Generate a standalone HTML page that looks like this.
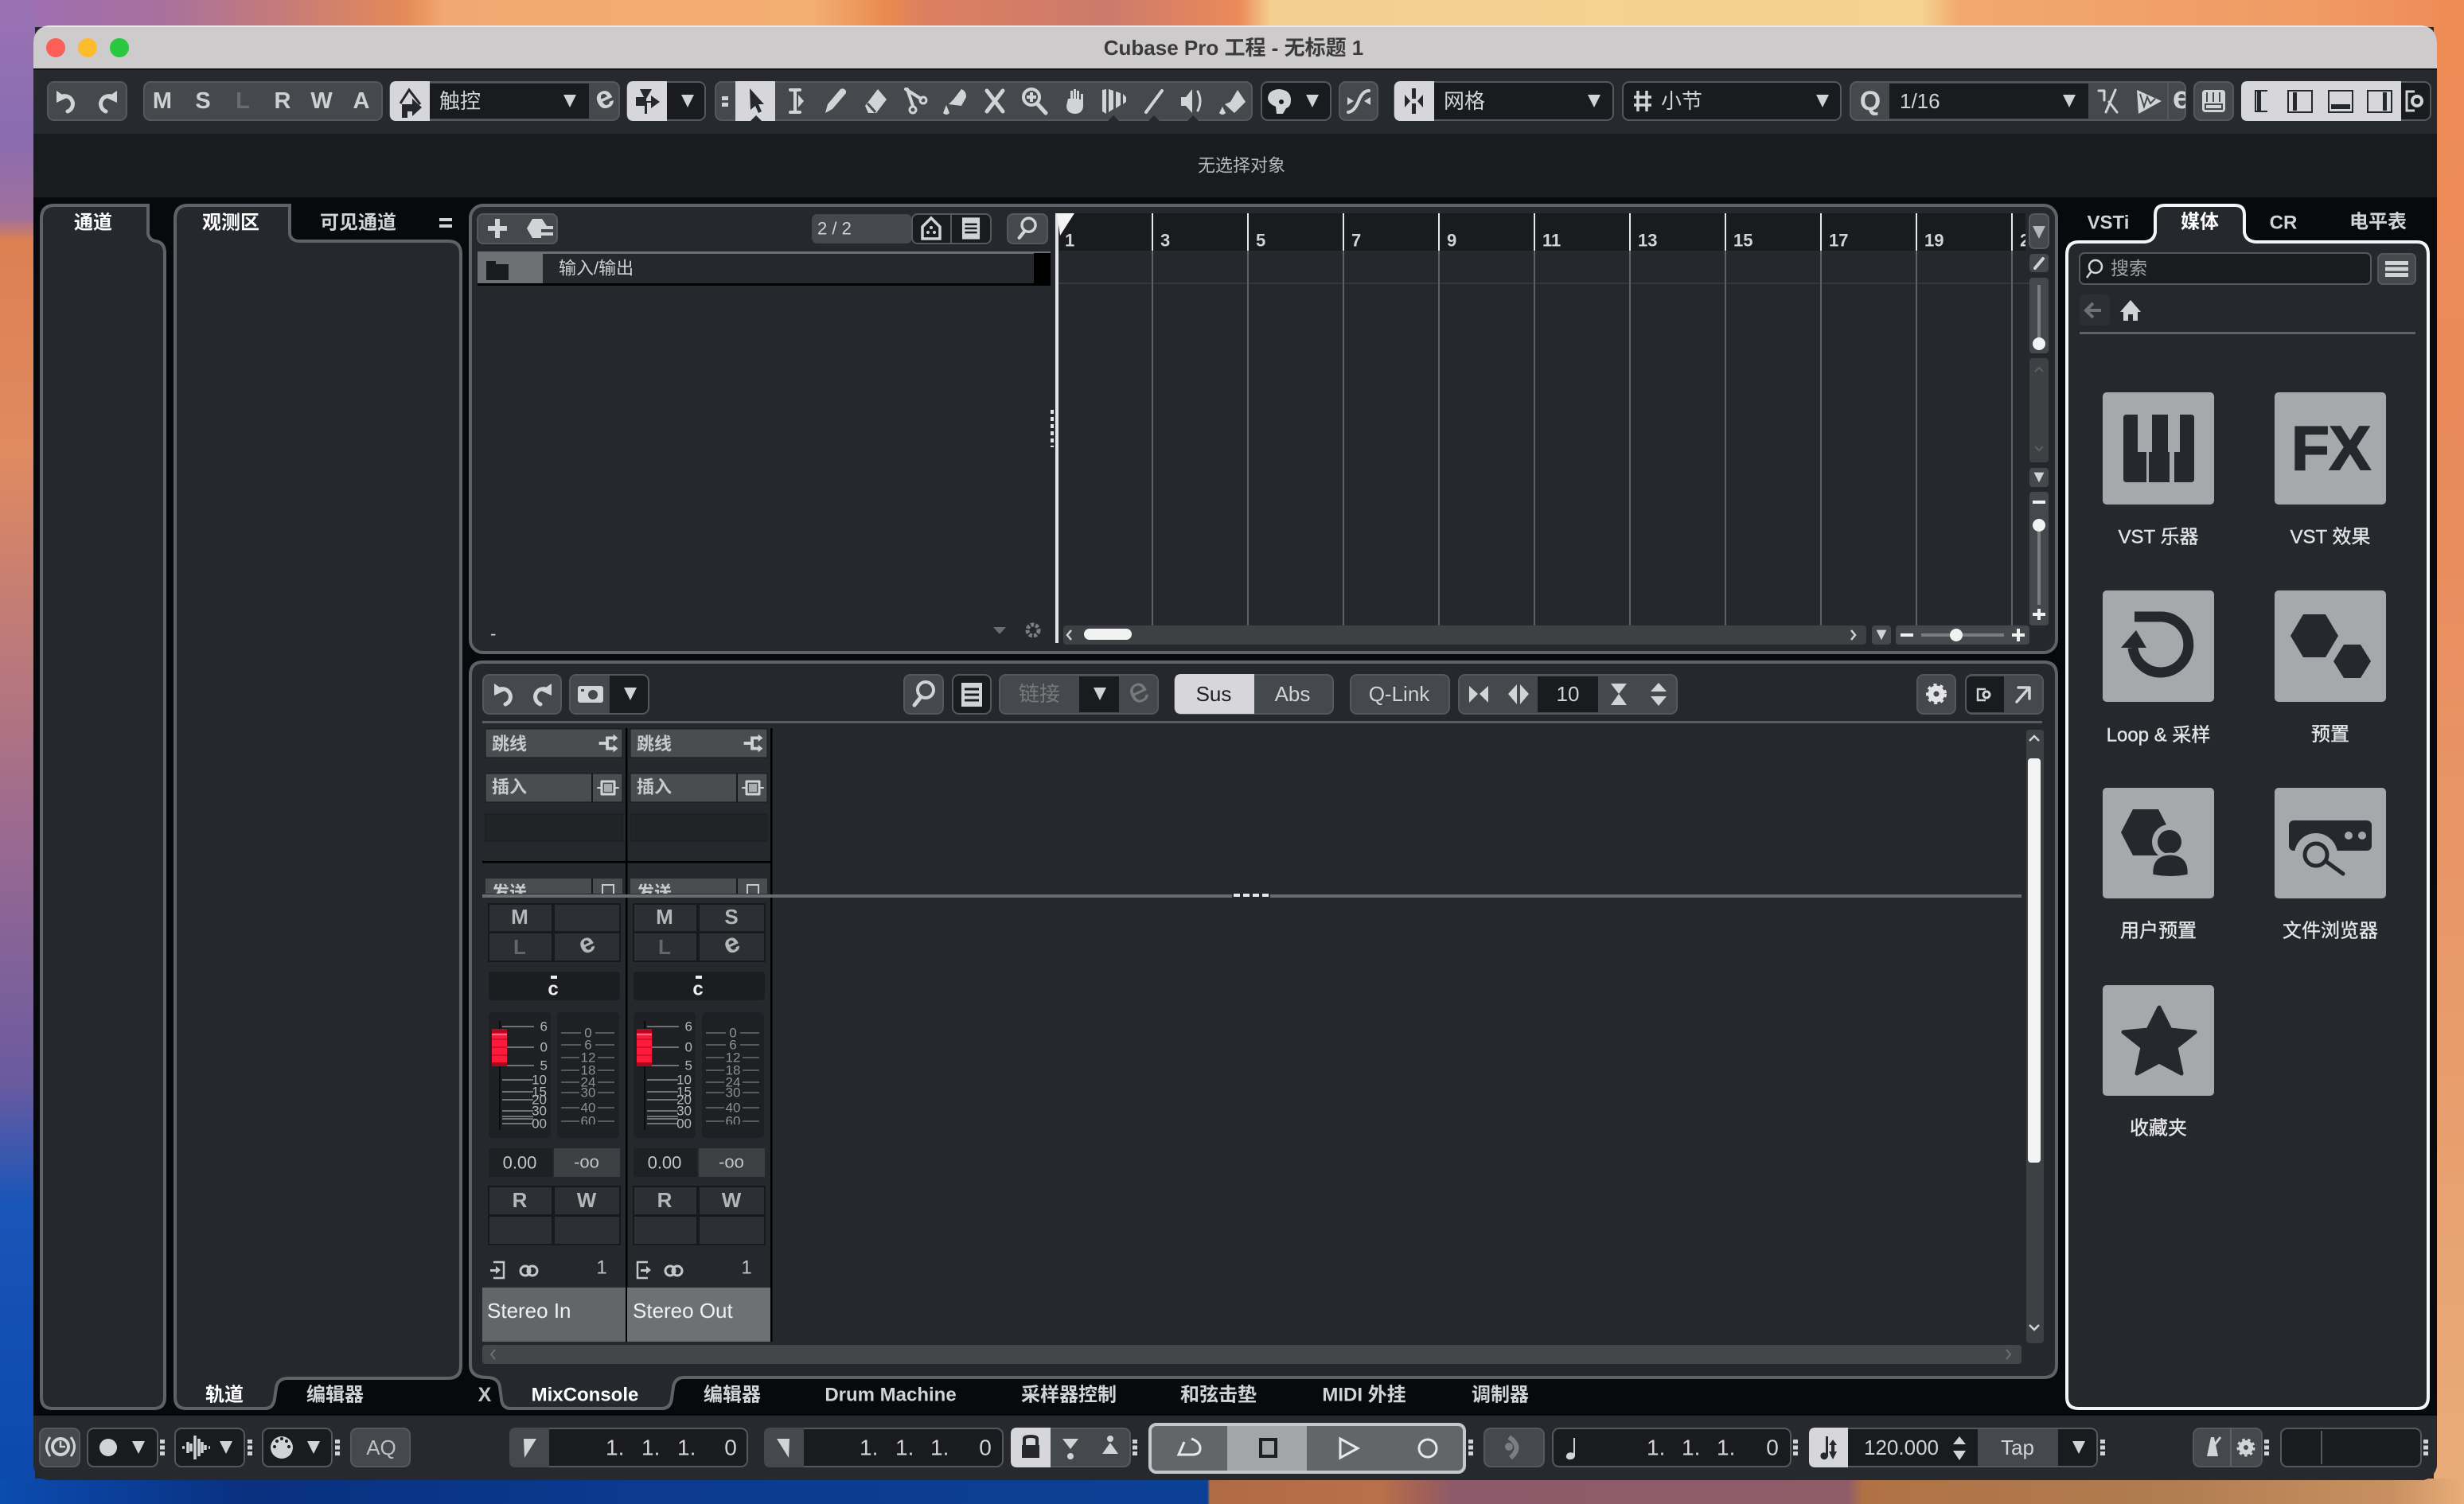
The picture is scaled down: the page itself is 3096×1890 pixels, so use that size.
<!DOCTYPE html>
<html lang="zh"><head><meta charset="utf-8"><title>Cubase Pro</title>
<style>
html,body{margin:0;padding:0;background:#25282c;width:3096px;height:1890px;overflow:hidden}
svg{display:block}
text{font-family:"Liberation Sans","Noto Sans CJK SC",sans-serif;font-size:26px;fill:#d2d3d5;dominant-baseline:central}
.m{text-anchor:middle}.r{text-anchor:end}
.b{font-weight:bold}
.s24{font-size:24px}.s22{font-size:22px}.s16{font-size:17px;fill:#b5b7b9}.s16b{font-size:17px;fill:#8e9093}
.g{fill:#45484c;stroke:#55585c;stroke-width:2}
.h{fill:#45484c}
.d{fill:#191b1e}
.db{fill:#191b1e;stroke:#55585c;stroke-width:2}
.w{fill:#d7d7db}
.i{fill:#d2d3d5}
.k{fill:#25282c}
.l{fill:none;stroke:#d2d3d5;stroke-width:4;stroke-linecap:round;stroke-linejoin:round}
.p{fill:#25282c;stroke:#5f6266;stroke-width:4}
.st{fill:#2c2f33;stroke:#17191c;stroke-width:2}
.lbl{fill:#e4e4e6;font-size:24px;stroke:#e4e4e6;stroke-width:.4}
.tk{stroke:#8a8c8f;stroke-width:1.5}
</style></head><body>
<svg xmlns="http://www.w3.org/2000/svg" width="3096" height="1890" viewBox="0 0 3096 1890">
<defs>
<linearGradient id="top" x1="0" x2="1" y1="0" y2="0" gradientUnits="objectBoundingBox">
<stop offset="0" stop-color="#9c6eb4"/><stop offset=".065" stop-color="#a8709e"/><stop offset=".115" stop-color="#c67b78"/><stop offset=".165" stop-color="#e48a58"/><stop offset=".18" stop-color="#f2a872"/><stop offset=".33" stop-color="#f3ae72"/><stop offset=".36" stop-color="#ea8a50"/><stop offset=".375" stop-color="#dc7f60"/><stop offset=".45" stop-color="#cc7a6c"/><stop offset=".503" stop-color="#ec8a58"/><stop offset=".516" stop-color="#f4d090"/><stop offset=".78" stop-color="#f3d38f"/><stop offset=".795" stop-color="#f2a870"/><stop offset=".94" stop-color="#f09a64"/><stop offset="1" stop-color="#ee8a54"/>
</linearGradient>
<linearGradient id="left" x1="0" x2="0" y1="0" y2="1">
<stop offset="0" stop-color="#9a72b4"/><stop offset=".09" stop-color="#8a6cb0"/><stop offset=".145" stop-color="#a0709c"/><stop offset=".16" stop-color="#dc8052"/><stop offset=".3" stop-color="#e08a60"/><stop offset=".55" stop-color="#9c6a90"/><stop offset=".72" stop-color="#6a5aa0"/><stop offset=".8" stop-color="#1a55b8"/><stop offset="1" stop-color="#0a48ac"/>
</linearGradient>
<linearGradient id="right" x1="0" x2="0" y1="0" y2="1">
<stop offset="0" stop-color="#ee8c56"/><stop offset=".3" stop-color="#e98a5c"/><stop offset=".7" stop-color="#e89c6c"/><stop offset="1" stop-color="#e8ad7a"/>
</linearGradient>
<linearGradient id="bot" x1="0" x2="1" y1="0" y2="0">
<stop offset="0" stop-color="#0b4cb0"/><stop offset=".1" stop-color="#0a3080"/><stop offset=".26" stop-color="#0b3a8f"/><stop offset=".49" stop-color="#0c4096"/><stop offset=".491" stop-color="#b06a44"/><stop offset=".56" stop-color="#b8704a"/><stop offset=".578" stop-color="#a06058"/><stop offset=".59" stop-color="#8c5a6a"/><stop offset=".75" stop-color="#8f5c68"/><stop offset=".756" stop-color="#b07244"/><stop offset=".88" stop-color="#b07c50"/><stop offset=".97" stop-color="#c89060"/><stop offset="1" stop-color="#e8ad7a"/>
</linearGradient>
<clipPath id="win"><rect x="42" y="32" width="3020" height="1828" rx="20"/></clipPath>
<clipPath id="cl1"><rect x="600" y="1100" width="400" height="23"/></clipPath>
<clipPath id="cl2"><rect x="1300" y="268" width="1245" height="60"/></clipPath>
<clipPath id="cl3"><rect x="2724" y="102" width="22" height="50"/></clipPath>
<clipPath id="cl4"><rect x="700" y="1272" width="80" height="141"/></clipPath>
<clipPath id="cl5"><rect x="882" y="1272" width="80" height="141"/></clipPath>
<g id="tri"><polygon class="i" points="-8,-8 8,-8 0,8"/></g>
<g id="dots"><rect class="i" x="-3" y="-10" width="6" height="5"/><rect class="i" x="-3" y="-2.500" width="6" height="5"/><rect class="i" x="-3" y="5" width="6" height="5"/></g>
<g id="undo"><path class="l" style="stroke-width:5" d="M-9 -4 A10 10 0 1 1 1 13"/><polygon class="i" points="-13,-13 -13,2 0,-4"/></g>
<g id="redo"><path class="l" style="stroke-width:5" d="M9 -4 A10 10 0 1 0 -1 13"/><polygon class="i" points="13,-13 13,2 0,-4"/></g>
<g id="srch"><circle class="l" cx="3" cy="-5" r="10" style="stroke-width:4"/><path class="l" style="stroke-width:5" d="M-3 4 L-11 14"/></g>
<g id="lst"><rect class="i" x="-13" y="-16" width="26" height="32"/><path d="M-9 -6H9M-9 0H9M-9 6H9" stroke="#191b1e" stroke-width="3"/></g>
<g id="rt"><path class="i" d="M-12 -2H-3V-9H7V-12L13 -7L7 -2V-5H1V5H7V2L13 7L7 12V9H-3V2H-12Z"/></g>
<g id="ins"><path class="l" style="stroke-width:3" d="M-8 -8H8V8H-8Z"/><rect class="i" x="-5" y="-5" width="10" height="10" opacity=".7"/><path class="l" style="stroke-width:2" d="M-13 0H-8M8 0H13"/></g>
</defs>

<!-- wallpaper -->
<rect x="0" y="0" width="3096" height="34" fill="url(#top)"/>
<rect x="0" y="0" width="44" height="1890" fill="url(#left)"/>
<rect x="3058" y="30" width="38" height="1860" fill="url(#right)"/>
<rect x="0" y="1858" width="3096" height="32" fill="url(#bot)"/>

<g clip-path="url(#win)">
<rect x="42" y="32" width="3020" height="1828" fill="#08090c"/>
<rect x="42" y="32" width="3020" height="56" fill="#cdcbcc"/>
<rect x="42" y="32" width="3020" height="2" fill="#e8e6e6"/>
<rect x="42" y="86" width="3020" height="2" fill="#111214"/>
<rect x="42" y="88" width="3020" height="80" fill="#26292d"/>
<rect x="42" y="168" width="3020" height="80" fill="#191b1e"/>
<rect x="42" y="1779" width="3020" height="81" fill="#26292d"/>
</g>

<!-- title bar -->
<circle cx="70" cy="60" r="12" fill="#fb5f57"/><circle cx="110" cy="60" r="12" fill="#fdbc2e"/><circle cx="150" cy="60" r="12" fill="#28c83f"/>
<text class="m b" x="1550" y="60" style="fill:#3b3a3c">Cubase Pro 工程 - 无标题 1</text>
<text class="m s22" x="1560" y="208" style="fill:#b5b7b9">无选择对象</text>

<!-- toolbar -->
<rect class="g" x="60" y="103" width="99" height="48" rx="8"/>
<use href="#undo" transform="translate(84,127)"/><use href="#redo" transform="translate(134,127)"/>
<rect class="g" x="181" y="103" width="299" height="48" rx="8"/>
<text class="m b" x="204" y="127" style="font-size:29px;fill:#cfd0d2">M</text><text class="m b" x="255" y="127" style="font-size:29px;fill:#cfd0d2">S</text><text class="m b" x="305" y="127" style="font-size:29px;fill:#6a6d70">L</text><text class="m b" x="355" y="127" style="font-size:29px;fill:#cfd0d2">R</text><text class="m b" x="404" y="127" style="font-size:29px;fill:#cfd0d2">W</text><text class="m b" x="454" y="127" style="font-size:29px;fill:#cfd0d2">A</text>
<rect class="g" x="490" y="103" width="288" height="48" rx="8"/>
<path class="w" d="M498 102H540V152H498Q490 152 490 144V110Q490 102 498 102Z"/>
<path fill="none" stroke="#25282c" stroke-width="3" d="M503 130L514 113L528 131"/>
<path class="k" d="M505 131H518V124L530 135L518 146V140H512V148H505Z"/>
<rect class="d" x="540" y="105" width="200" height="44"/>
<text x="552" y="127">触控</text><use href="#tri" transform="translate(716,127)"/>
<text class="m b" x="759" y="123" transform="rotate(-25 759 123)" style="font-size:40px">e</text>
<rect class="db" x="788" y="103" width="98" height="48" rx="8"/>
<path class="w" d="M796 102H838V152H796Q788 152 788 144V110Q788 102 796 102Z"/>
<path class="k" d="M804 112H819L812 124V127H818V120L829 128L818 136V129H813V143H810V133H799V122H810V124Z"/>
<use href="#tri" transform="translate(864,127)"/>
<rect class="g" x="899" y="103" width="674" height="48" rx="8"/>
<rect class="i" x="907" y="121" width="8" height="5"/><rect class="i" x="907" y="129" width="8" height="5"/>
<rect class="w" x="924" y="102" width="50" height="50"/>
<path class="k" d="M942 111L960 131L953 131L957 140L953 142L949 133L943 138Z"/>
<polygon class="k" points="943,152 950,145 957,152"/>
<path class="l" d="M993 113H1005M993 141H1005M999 113V141"/><path class="i" d="M1003 119L1010 127L1003 135Z"/>
<path class="i" d="M1037 142L1040 131L1056 112Q1060 110 1063 114L1063 117L1046 137Z"/>
<path class="i" d="M1103 112L1114 125L1101 142H1091L1087 133Z"/><path d="M1090 130L1100 141" stroke="#45484c" stroke-width="3"/>
<g transform="translate(1150,127)"><circle class="l" cx="-3" cy="11" r="4" style="stroke-width:3"/><circle class="l" cx="10" cy="-1" r="4" style="stroke-width:3"/><path class="l" d="M-12 -15L7 -3M-10 -15L-3 6"/></g>
<path class="i" d="M1198 125L1208 112Q1214 114 1214 122L1208 133L1192 131Z"/><path class="i" d="M1189 132L1193 142Q1189 146 1185 142Z"/>
<path class="l" style="stroke-width:5" d="M1240 114L1260 140M1260 114L1240 140"/>
<g transform="translate(1300,127)"><circle class="l" cx="-4" cy="-5" r="10"/><path class="i" d="M-6 -11H-2V-7H2V-3H-2V1H-6V-3H-10V-7H-6Z"/><path class="l" style="stroke-width:5" d="M3 3L14 15"/></g>
<path class="i" d="M1342 124H1345V114H1348V124H1349V112H1352V124H1353V114H1356V125H1358V118H1361V134Q1360 143 1350 143Q1340 142 1340 133Z"/>
<path class="i" d="M1385 113L1390 112V143L1385 140ZM1393 112L1399 114V137L1393 141ZM1402 115L1408 117V132L1402 136ZM1411 118L1415 122V128L1411 131Z"/>
<path class="l" d="M1440 141L1460 114"/>
<path class="i" d="M1484 122H1490L1498 112V142L1490 133H1484Z"/><path class="l" style="stroke-width:3" d="M1505 115Q1511 127 1505 139"/>
<path class="i" d="M1555 113L1565 128L1551 142L1539 131L1546 128Z"/><path class="i" d="M1536 134L1540 142Q1536 146 1532 142Z"/>
<polygon fill="#26292d" points="1392,152 1399,145 1406,152"/><polygon fill="#26292d" points="1443,152 1450,145 1457,152"/><polygon fill="#26292d" points="1492,152 1499,145 1506,152"/>
<rect class="db" x="1585" y="103" width="87" height="48" rx="8"/>
<path class="i" d="M1607 112Q1622 113 1622 126Q1622 134 1616 136L1612 143H1604L1603 134Q1593 130 1593 123Q1594 113 1607 112Z"/><circle cx="1610" cy="128" r="3" fill="#191b1e"/>
<use href="#tri" transform="translate(1649,127)"/>
<rect class="g" x="1683" y="103" width="48" height="48" rx="8"/>
<path class="l" d="M1694 141Q1702 140 1707 127Q1712 114 1720 114"/><path class="i" d="M1693 122L1701 127L1693 132ZM1722 122L1714 127L1722 132Z"/>
<rect class="db" x="1752" y="103" width="275" height="48" rx="8"/>
<path class="w" d="M1760 102H1802V152H1760Q1752 152 1752 144V110Q1752 102 1760 102Z"/>
<path class="k" d="M1774 111H1779V124H1774ZM1774 130H1779V143H1774ZM1765 119L1772 127L1765 135ZM1788 119L1781 127L1788 135Z"/>
<text x="1814" y="127">网格</text><use href="#tri" transform="translate(2003,127)"/>
<rect class="db" x="2039" y="103" width="274" height="48" rx="8"/>
<path fill="none" stroke="#d2d3d5" stroke-width="3.500" d="M2058 114V140M2069 114V140M2053 122H2075M2053 132H2075"/>
<text x="2087" y="127">小节</text><use href="#tri" transform="translate(2290,127)"/>
<rect class="g" x="2325" y="103" width="421" height="48" rx="8"/>
<rect class="d" x="2374" y="105" width="250" height="44"/>
<text class="m b" x="2350" y="127" style="font-size:34px">Q</text>
<text x="2387" y="127">1/16</text><use href="#tri" transform="translate(2600,127)"/>
<path class="l" d="M2637 114H2644M2644 114V126M2658 113L2646 141M2650 128L2660 141" style="stroke-width:3"/>
<path class="i" d="M2685 113L2716 127L2687 143Z"/><path d="M2689 118L2694 134L2698 122L2702 130L2708 124" fill="none" stroke="#45484c" stroke-width="2"/>
<path d="M2724 103V151" stroke="#55585c" stroke-width="2"/>
<text class="m b" x="2741" y="123" clip-path="url(#cl3)" style="font-size:40px">e</text>
<rect class="g" x="2757" y="103" width="49" height="48" rx="8"/>
<rect class="i" x="2767" y="113" width="29" height="28" rx="4"/><path d="M2771 131H2792V137H2771ZM2773 116V128M2781 116V128M2789 116V128" fill="none" stroke="#45484c" stroke-width="2"/>
<rect class="db" x="2817" y="103" width="237" height="48" rx="8"/>
<path class="w" d="M2824 102H3017V152H2824Q2816 152 2816 144V110Q2816 102 2824 102Z"/>
<path fill="none" stroke="#25282c" stroke-width="2" d="M2849 114H2834V140H2849"/><rect class="k" x="2836" y="114" width="5" height="26"/>
<rect x="2875" y="114" width="30" height="27" fill="none" stroke="#25282c" stroke-width="2"/><rect class="k" x="2881" y="116" width="5" height="23"/>
<rect x="2926" y="114" width="30" height="27" fill="none" stroke="#25282c" stroke-width="2"/><rect class="k" x="2929" y="131" width="24" height="6"/>
<rect x="2975" y="114" width="30" height="27" fill="none" stroke="#25282c" stroke-width="2"/><rect class="k" x="2994" y="116" width="5" height="23"/>
<path fill="none" stroke="#d2d3d5" stroke-width="3" d="M3034 115H3024V139H3034"/><circle cx="3037" cy="127" r="6" fill="none" stroke="#d2d3d5" stroke-width="4"/>

<!-- left panels -->
<path class="p" d="M52 275Q52 258 68 258H186V294Q188 302 196 303Q207 305 207 318V1756Q207 1770 193 1770H66Q52 1770 52 1756Z"/>
<text class="m b s24" x="117" y="280" style="fill:#fff">通道</text>
<path class="p" d="M220 275Q220 258 236 258H364V294Q366 303 376 303H563Q579 303 579 319V1716Q579 1732 563 1732H362Q349 1732 347 1744L345 1758Q343 1770 333 1770H234Q220 1770 220 1756Z"/>
<text class="m b s24" x="290" y="280" style="fill:#fff">观测区</text>
<text class="m b s24" x="450" y="280">可见通道</text>
<rect class="i" x="552" y="274" width="16" height="4"/><rect class="i" x="552" y="282" width="16" height="4"/>
<text class="m b s24" x="282" y="1753" style="fill:#fff">轨道</text>
<text class="m b s24" x="421" y="1753">编辑器</text>

<!-- project panel -->
<rect class="p" x="591" y="258" width="1993" height="562" rx="16"/>
<rect class="g" x="600" y="269" width="100" height="37" rx="7"/>
<path class="i" d="M622 275H628V284H637V290H628V299H622V290H613V284H622Z"/>
<path class="i" d="M669 275H681L687 284H695V288H680V292H695V296H680V299H669L662 287Z"/>
<rect class="h" x="1020" y="269" width="126" height="37" rx="7"/>
<rect class="db" x="1146" y="269" width="99" height="37" rx="7"/>
<text class="s22" x="1027" y="287">2 / 2</text>
<path fill="none" stroke="#d2d3d5" stroke-width="3.500" d="M1170 274L1181 285V300H1159V285Z"/><g class="i"><circle cx="1170" cy="286" r="2"/><circle cx="1166" cy="292" r="2"/><circle cx="1174" cy="292" r="2"/></g>
<use href="#lst" transform="translate(1220,287) scale(.85)"/>
<path d="M1195 269V306" stroke="#55585c" stroke-width="2"/>
<rect class="g" x="1266" y="269" width="50" height="37" rx="7"/>
<use href="#srch" transform="translate(1290,287) scale(.85)"/>

<rect x="600" y="316" width="720" height="42" fill="#25282c"/>
<rect x="600" y="316" width="720" height="3" fill="#6e7174"/>
<rect x="600" y="316" width="82" height="40" fill="#6e7174"/>
<path fill="#191b1e" d="M611 328H623V332H639V352H611Z"/>
<rect x="1299" y="318" width="21" height="40" fill="#000"/>
<rect x="600" y="356" width="720" height="3" fill="#000"/>
<text class="s22" x="702" y="337">输入/输出</text>
<text x="616" y="796" class="s22">-</text>
<polygon points="1248,788 1264,788 1256,797" fill="#6a6d70"/>
<circle cx="1298" cy="792" r="7" fill="none" stroke="#7c7e81" stroke-width="5" stroke-dasharray="4 2"/>
<rect x="1320" y="500" width="5" height="64" fill="#25282c"/>
<path d="M1322 515V562" stroke="#e4e4e6" stroke-width="4" stroke-dasharray="5 4"/>

<!-- arrange -->
<rect x="1328" y="268" width="1217" height="47" fill="#191b1e"/>
<rect x="1328" y="355" width="1222" height="2" fill="#34373b"/>
<g stroke="#5f6266" stroke-width="2"><path d="M1448 315V810M1568 315V810M1688 315V810M1808 315V810M1928 315V810M2048 315V810M2168 315V810M2288 315V810M2408 315V810M2528 315V810"/></g>
<g stroke="#e8e8ea" stroke-width="2"><path d="M1448 268V315M1568 268V315M1688 268V315M1808 268V315M1928 268V315M2048 268V315M2168 268V315M2288 268V315M2408 268V315M2528 268V315"/></g>
<rect x="1326" y="268" width="4" height="540" fill="#e4e4e6"/>
<polygon points="1328,268 1350,268 1332,296" fill="#f5f5f5"/>
<g clip-path="url(#cl2)">
<text class="b s22" x="1338" y="302">1</text><text class="b s22" x="1458" y="302">3</text><text class="b s22" x="1578" y="302">5</text><text class="b s22" x="1698" y="302">7</text><text class="b s22" x="1818" y="302">9</text><text class="b s22" x="1938" y="302">11</text><text class="b s22" x="2058" y="302">13</text><text class="b s22" x="2178" y="302">15</text><text class="b s22" x="2298" y="302">17</text><text class="b s22" x="2418" y="302">19</text><text class="b s22" x="2538" y="302">21</text>
</g>
<!-- arrange right controls -->
<rect class="g" x="2550" y="269" width="24" height="43" rx="6"/><polygon fill="#b4b6b8" points="2554,284 2570,284 2562,300"/>
<rect class="h" x="2550" y="319" width="24" height="23" rx="4"/><path class="l" d="M2557 337L2567 325"/>
<rect class="h" x="2550" y="349" width="24" height="95" rx="4"/><rect x="2560" y="358" width="4" height="70" fill="#7a7c7f"/><circle cx="2562" cy="432" r="8" fill="#f2f2f3"/>
<rect fill="#3e4144" x="2550" y="450" width="24" height="131" rx="4"/><path d="M2557 467L2562 462L2567 467M2557 561L2562 566L2567 561" fill="none" stroke="#5c5e61" stroke-width="2"/>
<rect class="h" x="2550" y="588" width="24" height="24" rx="4"/><use href="#tri" transform="translate(2562,600) scale(.8)"/>
<rect class="h" x="2550" y="618" width="24" height="168" rx="4"/><rect x="2554" y="629" width="16" height="4" fill="#f0f0f1"/><rect x="2560" y="668" width="4" height="92" fill="#7a7c7f"/><circle cx="2562" cy="660" r="8" fill="#f2f2f3"/><path d="M2560 765H2564V770H2570V774H2564V779H2560V774H2554V770H2560Z" fill="#f0f0f1"/>
<rect fill="#3e4144" x="1336" y="786" width="1009" height="24" rx="4"/>
<rect x="1362" y="790" width="60" height="14" rx="7" fill="#f2f2f3"/>
<path d="M1346 792L1341 798L1346 804M2326 792L2331 798L2326 804" fill="none" stroke="#d2d3d5" stroke-width="2.500"/>
<rect class="h" x="2352" y="786" width="24" height="24" rx="4"/><use href="#tri" transform="translate(2364,798) scale(.8)"/>
<rect class="h" x="2382" y="786" width="168" height="24" rx="4"/><rect x="2388" y="796" width="16" height="4" fill="#f0f0f1"/><rect x="2414" y="796" width="104" height="4" fill="#7a7c7f"/><circle cx="2458" cy="798" r="8" fill="#f2f2f3"/><path d="M2534 790H2538V796H2544V800H2538V806H2534V800H2528V796H2534Z" fill="#f0f0f1"/>

<!-- lower zone -->
<path class="p" d="M591 848Q591 832 607 832H2568Q2584 832 2584 848V1715Q2584 1731 2568 1731H860Q848 1731 846 1743L844 1758Q842 1770 832 1770H642Q631 1770 630 1758L628 1743Q626 1731 612 1731Q591 1731 591 1715Z"/>
<text class="m b s24" x="735" y="1753" style="fill:#fff">MixConsole</text>
<text class="m b s24" x="920" y="1753">编辑器</text>
<text class="m b s24" x="1119" y="1753">Drum Machine</text>
<text class="m b s24" x="1343" y="1753">采样器控制</text>
<text class="m b s24" x="1531" y="1753">和弦击垫</text>
<text class="m b s24" x="1714" y="1753">MIDI 外挂</text>
<text class="m b s24" x="1885" y="1753">调制器</text>
<text class="m b" x="609" y="1753" style="font-size:25px;fill:#c4c5c7">X</text>

<rect class="g" x="607" y="848" width="98" height="49" rx="8"/>
<use href="#undo" transform="translate(634,872)"/><use href="#redo" transform="translate(680,872)"/>
<rect class="db" x="716" y="848" width="99" height="49" rx="8"/>
<path class="h" d="M724 849H766V896H724Q717 896 717 889V856Q717 849 724 849Z"/>
<rect class="i" x="726" y="862" width="32" height="21" rx="3"/><circle cx="745" cy="873" r="6" fill="#45484c"/><rect x="730" y="866" width="4" height="3" fill="#45484c"/>
<use href="#tri" transform="translate(792,872)"/>
<rect class="g" x="1136" y="848" width="49" height="49" rx="8"/><use href="#srch" transform="translate(1160,872)"/>
<rect class="db" x="1197" y="848" width="48" height="49" rx="8"/><rect x="1208" y="858" width="26" height="30" class="i"/><path d="M1212 866H1230M1212 873H1230M1212 880H1230" stroke="#191b1e" stroke-width="3"/>
<rect class="g" x="1256" y="848" width="199" height="49" rx="8"/><rect class="d" x="1356" y="850" width="50" height="45"/>
<text x="1280" y="872" style="fill:#77797b">链接</text><use href="#tri" transform="translate(1382,872)"/>
<text class="m" x="1430" y="868" transform="rotate(-25 1430 868)" style="font-size:44px;fill:#77797b">e</text>
<rect class="g" x="1476" y="848" width="199" height="49" rx="8"/>
<path class="w" d="M1484 847H1576V897H1484Q1476 897 1476 889V855Q1476 847 1484 847Z"/>
<text class="m" x="1525" y="872" style="fill:#1d1f22">Sus</text><text class="m" x="1624" y="872">Abs</text>
<rect class="g" x="1697" y="848" width="124" height="49" rx="8"/><text class="m" x="1758" y="872">Q-Link</text>
<rect class="g" x="1833" y="848" width="274" height="49" rx="8"/><rect class="d" x="1932" y="850" width="76" height="45"/>
<path class="i" d="M1846 862L1857 872L1846 883ZM1870 862L1859 872L1870 883ZM1906 860V885L1895 872ZM1910 860V885L1921 872Z"/>
<text class="m" x="1970" y="872">10</text>
<path class="i" d="M2024 859H2044L2034 872L2044 886H2024L2034 872Z"/>
<path class="i" d="M2084 858L2094 869H2074ZM2084 887L2094 875H2074Z"/>
<rect class="g" x="2409" y="848" width="48" height="49" rx="8"/>
<circle cx="2433" cy="872" r="7" fill="none" stroke="#e4e4e6" stroke-width="7"/><circle cx="2433" cy="872" r="11" fill="none" stroke="#e4e4e6" stroke-width="4" stroke-dasharray="4 4"/>
<rect class="g" x="2470" y="848" width="97" height="49" rx="8"/><path class="d" d="M2478 850H2518V895H2478Q2471 895 2471 888V857Q2471 850 2478 850Z"/>
<path fill="none" stroke="#d2d3d5" stroke-width="2.500" d="M2495 866H2485V880H2495"/><circle cx="2496" cy="873" r="4" fill="none" stroke="#d2d3d5" stroke-width="3"/>
<path class="l" d="M2534 882L2548 866M2536 864H2550V878" style="stroke-width:3.500"/>
<rect x="606" y="906" width="1960" height="3" fill="#5a5d60"/>

<!-- strips -->
<rect x="786" y="915" width="2.500" height="771" fill="#000"/><rect x="968" y="915" width="2.500" height="771" fill="#000"/>
<rect x="606" y="1082" width="362" height="2.500" fill="#000"/>
<rect x="610" y="916" width="172" height="36" fill="#4a4d50" stroke="#17191c"/><rect x="792" y="916" width="172" height="36" fill="#4a4d50" stroke="#17191c"/>
<text class="b s22" x="618" y="935" style="fill:#c8c9cb">跳线</text><text class="b s22" x="800" y="935" style="fill:#c8c9cb">跳线</text>
<use href="#rt" transform="translate(764,934) scale(.95)"/><use href="#rt" transform="translate(946,934) scale(.95)"/>
<rect x="610" y="972" width="172" height="36" fill="#4a4d50" stroke="#17191c"/><rect x="792" y="972" width="172" height="36" fill="#4a4d50" stroke="#17191c"/>
<path d="M744 972V1008M926 972V1008" stroke="#17191c" stroke-width="2"/>
<text class="b s22" x="618" y="989" style="fill:#c8c9cb">插入</text><text class="b s22" x="800" y="989" style="fill:#c8c9cb">插入</text>
<use href="#ins" transform="translate(764,990)"/><use href="#ins" transform="translate(946,990)"/>
<rect x="610" y="1023" width="172" height="34" fill="#212427" stroke="#1b1d20"/><rect x="792" y="1023" width="172" height="34" fill="#212427" stroke="#1b1d20"/>
<g clip-path="url(#cl1)">
<rect x="610" y="1104" width="172" height="36" fill="#4a4d50"/><rect x="792" y="1104" width="172" height="36" fill="#4a4d50"/>
<path d="M744 1104V1140M926 1104V1140" stroke="#17191c" stroke-width="2"/>
<text class="b s22" x="618" y="1122" style="fill:#c8c9cb">发送</text><text class="b s22" x="800" y="1122" style="fill:#c8c9cb">发送</text>
<rect x="757" y="1112" width="14" height="16" fill="none" stroke="#c8c9cb" stroke-width="2"/><rect x="939" y="1112" width="14" height="16" fill="none" stroke="#c8c9cb" stroke-width="2"/>
</g>
<rect x="606" y="1124" width="1934" height="4" fill="#6a6d70"/>
<rect x="1548" y="1122" width="48" height="8" fill="#25282c"/>
<path d="M1550 1125H1594" stroke="#e8e8ea" stroke-width="4" stroke-dasharray="8 4"/>
<!-- M S L e -->
<rect class="st" x="614" y="1136" width="80" height="35"/><rect class="st" x="696" y="1136" width="83" height="35"/><rect class="st" x="614" y="1172" width="80" height="36"/><rect class="st" x="696" y="1172" width="83" height="36"/>
<rect class="st" x="796" y="1136" width="80" height="35"/><rect class="st" x="878" y="1136" width="83" height="35"/><rect class="st" x="796" y="1172" width="80" height="36"/><rect class="st" x="878" y="1172" width="83" height="36"/>
<text class="m b" x="653" y="1152" style="fill:#b4b6b8">M</text><text class="m b" x="835" y="1152" style="fill:#b4b6b8">M</text><text class="m b" x="919" y="1152" style="fill:#b4b6b8">S</text>
<text class="m b" x="653" y="1190" style="fill:#65686b">L</text><text class="m b" x="835" y="1190" style="fill:#65686b">L</text>
<text class="m b" x="737" y="1186" transform="rotate(-25 737 1186)" style="fill:#b4b6b8;font-size:34px">e</text><text class="m b" x="919" y="1186" transform="rotate(-25 919 1186)" style="fill:#b4b6b8;font-size:34px">e</text>
<rect x="614" y="1221" width="165" height="36" rx="4" fill="#1b1d20"/><rect x="796" y="1221" width="165" height="36" rx="4" fill="#1b1d20"/>
<rect x="692" y="1226" width="8" height="4" fill="#eee"/><rect x="874" y="1226" width="8" height="4" fill="#eee"/>
<text class="m b s24" x="695" y="1243" style="fill:#eee">c</text><text class="m b s24" x="877" y="1243" style="fill:#eee">c</text>
<!-- faders -->
<rect x="614" y="1272" width="78" height="158" rx="5" fill="#1e2023"/><rect x="700" y="1272" width="78" height="158" rx="5" fill="#1e2023"/>
<rect x="796" y="1272" width="78" height="158" rx="5" fill="#1e2023"/><rect x="882" y="1272" width="78" height="158" rx="5" fill="#1e2023"/>
<g>
<rect x="627" y="1283" width="2" height="137" fill="#0b0c0e"/>
<path class="tk" d="M631 1290H671M631 1316H671M631 1339H671M631 1357H670M631 1372H670M631 1382H670M631 1396H670M631 1403H670M631 1406H670M631 1412H670"/>
<text class="r s16" x="688" y="1290">6</text><text class="r s16" x="688" y="1316">0</text><text class="r s16" x="688" y="1339">5</text><text class="r s16" x="687" y="1357">10</text><text class="r s16" x="687" y="1372">15</text><text class="r s16" x="687" y="1382">20</text><text class="r s16" x="687" y="1396">30</text><text class="r s16" x="687" y="1412">00</text>
<rect x="618" y="1293" width="19" height="47" rx="2" fill="#ff1a3c"/><rect x="618" y="1293" width="19" height="5" fill="#b00a22"/><rect x="618" y="1335" width="19" height="5" fill="#a80a20"/><path d="M618 1306H637M618 1316H637M618 1326H637" stroke="#c20f2a" stroke-width="1.500"/>
<path d="M618 1300H637" stroke="#ff6a80" stroke-width="2"/>
</g>
<g transform="translate(182,0)">
<rect x="627" y="1283" width="2" height="137" fill="#0b0c0e"/>
<path class="tk" d="M631 1290H671M631 1316H671M631 1339H671M631 1357H670M631 1372H670M631 1382H670M631 1396H670M631 1403H670M631 1406H670M631 1412H670"/>
<text class="r s16" x="688" y="1290">6</text><text class="r s16" x="688" y="1316">0</text><text class="r s16" x="688" y="1339">5</text><text class="r s16" x="687" y="1357">10</text><text class="r s16" x="687" y="1372">15</text><text class="r s16" x="687" y="1382">20</text><text class="r s16" x="687" y="1396">30</text><text class="r s16" x="687" y="1412">00</text>
<rect x="618" y="1293" width="19" height="47" rx="2" fill="#ff1a3c"/><rect x="618" y="1293" width="19" height="5" fill="#b00a22"/><rect x="618" y="1335" width="19" height="5" fill="#a80a20"/><path d="M618 1306H637M618 1316H637M618 1326H637" stroke="#c20f2a" stroke-width="1.500"/>
<path d="M618 1300H637" stroke="#ff6a80" stroke-width="2"/>
</g>
<g clip-path="url(#cl4)">
<path stroke="#6a6c6f" stroke-width="1.500" d="M705 1298H730M748 1298H772M705 1313H730M748 1313H772M705 1329H728M751 1329H772M705 1345H728M751 1345H772M705 1360H728M751 1360H772M705 1373H728M751 1373H772M705 1392H728M751 1392H772M705 1409H728M751 1409H772"/>
<text class="m s16b" x="739" y="1298">0</text><text class="m s16b" x="739" y="1313">6</text><text class="m s16b" x="739" y="1329">12</text><text class="m s16b" x="739" y="1345">18</text><text class="m s16b" x="739" y="1360">24</text><text class="m s16b" x="739" y="1373">30</text><text class="m s16b" x="739" y="1392">40</text><text class="m s16b" x="739" y="1409">60</text>
</g>
<g clip-path="url(#cl5)">
<path stroke="#6a6c6f" stroke-width="1.500" d="M887 1298H912M930 1298H954M887 1313H912M930 1313H954M887 1329H910M933 1329H954M887 1345H910M933 1345H954M887 1360H910M933 1360H954M887 1373H910M933 1373H954M887 1392H910M933 1392H954M887 1409H910M933 1409H954"/>
<text class="m s16b" x="921" y="1298">0</text><text class="m s16b" x="921" y="1313">6</text><text class="m s16b" x="921" y="1329">12</text><text class="m s16b" x="921" y="1345">18</text><text class="m s16b" x="921" y="1360">24</text><text class="m s16b" x="921" y="1373">30</text><text class="m s16b" x="921" y="1392">40</text><text class="m s16b" x="921" y="1409">60</text>
</g>
<!-- values -->
<rect x="614" y="1443" width="80" height="36" fill="#1e2023"/><rect x="696" y="1443" width="83" height="36" fill="#3d4043"/>
<rect x="796" y="1443" width="80" height="36" fill="#1e2023"/><rect x="878" y="1443" width="83" height="36" fill="#3d4043"/>
<text class="m s22" x="653" y="1461" style="fill:#c4c5c7">0.00</text><text class="m s22" x="737" y="1460" style="fill:#c4c5c7">-oo</text>
<text class="m s22" x="835" y="1461" style="fill:#c4c5c7">0.00</text><text class="m s22" x="919" y="1460" style="fill:#c4c5c7">-oo</text>
<rect class="st" x="614" y="1491" width="80" height="36"/><rect class="st" x="696" y="1491" width="83" height="36"/><rect class="st" x="614" y="1528" width="80" height="36"/><rect class="st" x="696" y="1528" width="83" height="36"/>
<rect class="st" x="796" y="1491" width="80" height="36"/><rect class="st" x="878" y="1491" width="83" height="36"/><rect class="st" x="796" y="1528" width="80" height="36"/><rect class="st" x="878" y="1528" width="83" height="36"/>
<text class="m b" x="653" y="1508" style="fill:#b4b6b8">R</text><text class="m b" x="737" y="1508" style="fill:#b4b6b8">W</text><text class="m b" x="835" y="1508" style="fill:#b4b6b8">R</text><text class="m b" x="919" y="1508" style="fill:#b4b6b8">W</text>
<!-- io -->
<path fill="none" stroke="#c4c5c7" stroke-width="2.500" d="M620 1586H633V1606H620"/><path fill="#c4c5c7" d="M616 1595H623V1591L629 1596L623 1601V1598H616Z"/>
<path fill="none" stroke="#c4c5c7" stroke-width="2.500" d="M814 1586H801V1606H814"/><path fill="#c4c5c7" d="M805 1595H812V1591L818 1596L812 1601V1598H805Z"/>
<g fill="none" stroke="#c4c5c7" stroke-width="3"><circle cx="660" cy="1597" r="6"/><circle cx="669" cy="1597" r="6"/><circle cx="842" cy="1597" r="6"/><circle cx="851" cy="1597" r="6"/></g>
<text class="m s24" x="756" y="1593" style="fill:#c4c5c7">1</text><text class="m s24" x="938" y="1593" style="fill:#c4c5c7">1</text>
<rect x="606" y="1618" width="180" height="68" fill="#636669"/><rect x="788" y="1618" width="180" height="68" fill="#6e7174"/>
<text x="612" y="1647" style="fill:#f0f0f1">Stereo In</text><text x="795" y="1647" style="fill:#f0f0f1">Stereo Out</text>
<!-- scrolls -->
<rect x="606" y="1690" width="1934" height="24" rx="4" fill="#44474a"/>
<path d="M622 1696L617 1702L622 1708M2521 1696L2526 1702L2521 1708" fill="none" stroke="#6c6e71" stroke-width="2"/>
<rect x="2546" y="917" width="22" height="771" rx="4" fill="#3e4144"/>
<rect x="2548" y="953" width="16" height="508" rx="4" fill="#f3f3f4"/>
<path d="M2550 931L2556 925L2562 931M2550 1665L2556 1671L2562 1665" fill="none" stroke="#d2d3d5" stroke-width="2.500"/>

<!-- right panel -->
<path d="M2597 320Q2597 304 2612 304H2695Q2706 303 2708 292V270Q2708 258 2720 258H2808Q2820 258 2820 270V292Q2822 303 2834 304H3037Q3051 304 3051 320V1756Q3051 1770 3037 1770H2612Q2597 1770 2597 1756Z" fill="#25282c" stroke="#f5f5f7" stroke-width="4"/>
<text class="m b s24" x="2649" y="280">VSTi</text><text class="m b s24" x="2764" y="279" style="fill:#fff">媒体</text><text class="m b s24" x="2869" y="280">CR</text><text class="m b s24" x="2988" y="279">电平表</text>
<rect class="db" x="2613" y="318" width="366" height="39" rx="6"/>
<circle cx="2633" cy="335" r="8" fill="none" stroke="#d2d3d5" stroke-width="2.500"/><path d="M2627 342L2622 349" stroke="#d2d3d5" stroke-width="2.500"/>
<text x="2652" y="337" style="font-size:23px;fill:#a2a4a6">搜索</text>
<rect class="g" x="2988" y="319" width="47" height="38" rx="6"/>
<path class="i" d="M2997 328H3026V333H2997ZM2997 335.500H3026V340.500H2997ZM2997 343H3026V348H2997Z"/>
<rect x="2613" y="370" width="38" height="39" rx="6" fill="#2c2f33"/>
<path d="M2640 390H2622M2630 381L2621 390L2630 399" fill="none" stroke="#6e7073" stroke-width="4"/>
<path class="i" d="M2677 377L2690 392H2686V403H2680V395H2674V403H2668V392H2664Z"/>
<rect x="2613" y="417" width="422" height="3" fill="#5f6266"/>

<!-- media tiles -->
<g transform="translate(2642,493)"><rect width="140" height="141" rx="5" fill="#a6a9ac"/><path class="k" d="M26 32Q26 28 30 28H44V75H55V113H30Q26 113 26 109ZM62 28H82V75H84V113H58V75H62ZM97 28H111Q115 28 115 32V109Q115 113 111 113H90V75H97Z"/></g>
<text class="m lbl" x="2712" y="675">VST 乐器</text>
<g transform="translate(2858,493)"><rect width="140" height="141" rx="5" fill="#a6a9ac"/><text class="b m" x="71" y="70" style="font-size:78px;fill:#25282c;stroke:#25282c;stroke-width:2">FX</text></g>
<text class="m lbl" x="2928" y="675">VST 效果</text>
<g transform="translate(2642,742)"><rect width="140" height="140" rx="5" fill="#a6a9ac"/><path d="M40 33Q52 33 72 33A35 35 0 1 1 38 72" fill="none" stroke="#25282c" stroke-width="13"/><polygon class="k" points="23,72 42,50 55,72"/></g>
<text class="m lbl" x="2712" y="924">Loop &amp; 采样</text>
<g transform="translate(2858,742)"><rect width="140" height="140" rx="5" fill="#a6a9ac"/><polygon class="k" points="20,57 36,30 64,30 80,57 64,84 36,84"/><polygon class="k" points="74,89 87,68 108,68 121,89 108,110 87,110"/></g>
<text class="m lbl" x="2928" y="923">预置</text>
<g transform="translate(2642,990)"><rect width="140" height="139" rx="5" fill="#a6a9ac"/><polygon class="k" points="23,56 38,27 70,27 85,56 70,85 38,85"/><circle cx="84" cy="68" r="22" fill="#a6a9ac"/><circle cx="84" cy="68" r="15" class="k"/><path class="k" d="M62 110Q60 84 85 83Q110 84 108 110Q85 115 62 110Z" stroke="#a6a9ac" stroke-width="3"/></g>
<text class="m lbl" x="2712" y="1170">用户预置</text>
<g transform="translate(2858,990)"><rect width="140" height="139" rx="5" fill="#a6a9ac"/><rect class="k" x="18" y="41" width="104" height="38" rx="6"/><circle cx="93" cy="60" r="5" fill="#a6a9ac"/><circle cx="110" cy="60" r="5" fill="#a6a9ac"/><circle cx="52" cy="84" r="27" fill="#a6a9ac"/><circle cx="52" cy="84" r="14" fill="none" stroke="#25282c" stroke-width="5"/><path d="M64 92L86 108" stroke="#25282c" stroke-width="5" stroke-linecap="round"/></g>
<text class="m lbl" x="2928" y="1170">文件浏览器</text>
<g transform="translate(2642,1238)"><rect width="140" height="139" rx="5" fill="#a6a9ac"/><polygon class="k" stroke="#25282c" stroke-width="5" stroke-linejoin="round" points="71,28 85,56 116,59 92,78 99,111 71,96 43,111 50,78 26,59 57,56"/></g>
<text class="m lbl" x="2712" y="1418">收藏夹</text>

<!-- transport -->
<rect class="g" x="50" y="1795" width="50" height="48" rx="8"/>
<circle cx="76" cy="1818" r="10" fill="none" stroke="#d2d3d5" stroke-width="4"/><path d="M76 1811V1818H82" fill="none" stroke="#d2d3d5" stroke-width="2.500"/><path d="M63 1806Q54 1818 63 1830M89 1806Q98 1818 89 1830" fill="none" stroke="#d2d3d5" stroke-width="3"/>
<rect class="db" x="110" y="1795" width="88" height="48" rx="8"/><circle cx="136" cy="1819" r="11" class="i"/><use href="#tri" transform="translate(174,1819)"/><use href="#dots" transform="translate(204,1819)"/>
<rect class="db" x="220" y="1795" width="87" height="48" rx="8"/><path d="M229 1819H232M236 1812V1826M240 1814V1824M245 1804V1834M250 1808V1830M254 1812V1826M258 1816V1822M262 1819H264" stroke="#d2d3d5" stroke-width="3.500"/><use href="#tri" transform="translate(284,1819)"/><use href="#dots" transform="translate(314,1819)"/>
<rect class="db" x="330" y="1795" width="87" height="48" rx="8"/><circle cx="354" cy="1819" r="14" class="i"/><g fill="#191b1e"><circle cx="345" cy="1818" r="2"/><circle cx="348" cy="1811" r="2"/><circle cx="354" cy="1808" r="2"/><circle cx="360" cy="1811" r="2"/><circle cx="363" cy="1818" r="2"/></g><use href="#tri" transform="translate(394,1819)"/><use href="#dots" transform="translate(424,1819)"/>
<rect class="g" x="441" y="1795" width="74" height="48" rx="8"/><text class="m" x="479" y="1819" style="fill:#bfc0c2">AQ</text>

<rect class="db" x="641" y="1795" width="298" height="48" rx="8"/><path class="h" d="M648 1794H690V1844H648Q640 1844 640 1836V1802Q640 1794 648 1794Z"/>
<polygon class="i" points="658,1808 674,1808 659,1832"/>
<text x="761" y="1819" style="font-size:28px">1.</text><text x="806" y="1819" style="font-size:28px">1.</text><text x="851" y="1819" style="font-size:28px">1.</text><text class="m" x="918" y="1819" style="font-size:28px">0</text>
<rect class="db" x="961" y="1795" width="299" height="48" rx="8"/><path class="h" d="M968 1794H1010V1844H968Q960 1844 960 1836V1802Q960 1794 968 1794Z"/>
<polygon class="i" points="976,1808 992,1808 991,1832"/>
<text x="1080" y="1819" style="font-size:28px">1.</text><text x="1125" y="1819" style="font-size:28px">1.</text><text x="1169" y="1819" style="font-size:28px">1.</text><text class="m" x="1238" y="1819" style="font-size:28px">0</text>
<rect class="g" x="1271" y="1795" width="149" height="48" rx="8"/>
<path class="w" d="M1278 1794H1320V1844H1278Q1270 1844 1270 1836V1802Q1270 1794 1278 1794Z"/>
<path class="k" d="M1285 1817V1808Q1285 1803 1295 1803Q1305 1803 1305 1808V1817H1301V1809Q1301 1807 1295 1807Q1289 1807 1289 1809V1817ZM1284 1816H1306V1832H1284Z"/>
<path class="i" d="M1335 1808H1355L1345 1821Z"/><circle cx="1345" cy="1830" r="4" class="i"/>
<circle cx="1395" cy="1808" r="4" class="i"/><polygon class="i" points="1385,1827 1405,1827 1395,1813"/>
<use href="#dots" transform="translate(1426,1819)"/>

<rect x="1445" y="1790" width="395" height="60" rx="8" fill="#636669" stroke="#c5c8cb" stroke-width="4"/>
<rect x="1542" y="1792" width="100" height="56" fill="#a3a6a9"/>
<path d="M1497 1808Q1508 1812 1508 1820Q1508 1828 1498 1828H1481L1488 1812" fill="none" stroke="#e8e8ea" stroke-width="3"/>
<rect x="1584" y="1809" width="19" height="21" fill="none" stroke="#1d1f22" stroke-width="4"/>
<path d="M1684 1808L1706 1820L1684 1832Z" fill="none" stroke="#e8e8ea" stroke-width="3"/>
<circle cx="1794" cy="1820" r="11" fill="none" stroke="#e8e8ea" stroke-width="3"/>
<use href="#dots" transform="translate(1848,1819)"/>
<rect class="g" x="1865" y="1795" width="75" height="48" rx="8"/><path d="M1896 1806Q1914 1818 1898 1832" fill="none" stroke="#7c7e81" stroke-width="6"/><circle cx="1896" cy="1818" r="5" fill="#7c7e81"/>

<rect class="db" x="1951" y="1795" width="299" height="48" rx="8"/>
<path class="i" d="M1977 1807H1979V1830Q1977 1835 1971 1834Q1966 1832 1969 1827Q1972 1824 1977 1826Z"/>
<text x="2069" y="1819" style="font-size:28px">1.</text><text x="2113" y="1819" style="font-size:28px">1.</text><text x="2157" y="1819" style="font-size:28px">1.</text><text class="m" x="2227" y="1819" style="font-size:28px">0</text>
<use href="#dots" transform="translate(2256,1819)"/>
<rect class="db" x="2274" y="1795" width="361" height="48" rx="8"/>
<path class="w" d="M2281 1794H2322V1844H2281Q2273 1844 2273 1836V1802Q2273 1794 2281 1794Z"/>
<path class="k" d="M2294 1805H2297V1830Q2295 1835 2291 1834Q2286 1832 2288 1827Q2291 1824 2294 1826ZM2303 1809L2308 1816H2305V1824H2308L2303 1834L2298 1824H2301V1816H2298Z"/>
<text x="2342" y="1819">120.000</text>
<path class="i" d="M2462 1805L2470 1815H2454ZM2462 1835L2470 1823H2454Z"/>
<rect class="h" x="2485" y="1796" width="101" height="46"/><text class="m" x="2535" y="1819">Tap</text>
<use href="#tri" transform="translate(2612,1819)"/>
<use href="#dots" transform="translate(2642,1819)"/>
<rect class="g" x="2756" y="1795" width="86" height="48" rx="8"/><path d="M2803 1795V1843" stroke="#5f6266" stroke-width="2"/>
<path fill="#d2d3d5" d="M2773 1830L2778 1806H2782L2787 1830Z"/><path d="M2783 1815L2790 1806" stroke="#d2d3d5" stroke-width="3"/>
<circle cx="2822" cy="1819" r="6" fill="none" stroke="#d2d3d5" stroke-width="6"/><circle cx="2822" cy="1819" r="10" fill="none" stroke="#d2d3d5" stroke-width="3" stroke-dasharray="3.500 3.500"/>
<use href="#dots" transform="translate(2848,1819)"/>
<rect class="db" x="2866" y="1795" width="176" height="48" rx="8"/><path d="M2917 1798V1840" stroke="#55585c" stroke-width="2"/>
<use href="#dots" transform="translate(3048,1819)"/>
</svg>
</body></html>
